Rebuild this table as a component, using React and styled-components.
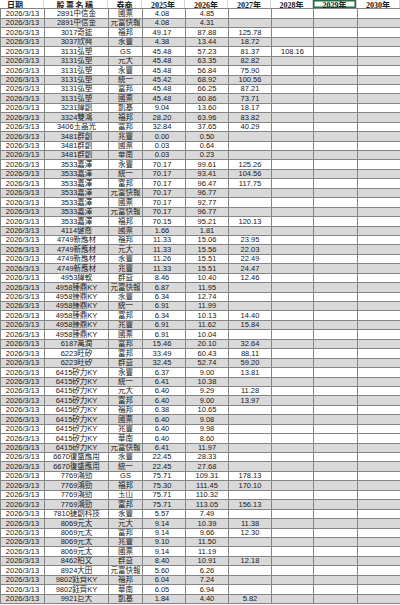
import React from "react";
import styled, { createGlobalStyle } from "styled-components";

const GlobalStyle = createGlobalStyle`
  html, body {
    margin: 0;
    padding: 0;
    background: #ffffff;
  }
`;

const COLS = "44px 64px 34px 43px 43px 43px 42px 44px 43px";
const ROW_H = "9.45px";
const LINE = "#858585";

const Sheet = styled.div`
  width: 400px;
  display: flex;
  flex-direction: column;
  font-family: "Liberation Sans", "Noto Sans CJK TC", sans-serif;
  color: #202020;
`;

const HeaderRow = styled.div`
  display: grid;
  grid-template-columns: ${COLS};
  height: ${ROW_H};
  background: #ffffff;
  border-bottom: 1px solid ${LINE};
  box-sizing: border-box;
`;

const HeadCell = styled.div`
  display: flex;
  align-items: center;
  justify-content: ${(p) => (p.$left ? "flex-start" : "center")};
  padding-left: ${(p) => (p.$left ? "7px" : "0")};
  font-family: "Liberation Serif", "Noto Sans CJK TC", serif;
  font-size: 8px;
  font-weight: 700;
  letter-spacing: ${(p) => (p.$spaced ? "1.5px" : "0")};
  white-space: nowrap;
  overflow: hidden;
  border-right: 1px solid #d4d4d4;
  box-sizing: border-box;
  box-shadow: ${(p) => (p.$selected ? "inset 0 0 0 1.5px #1f7244" : "none")};
`;

const Row = styled.div`
  display: grid;
  grid-template-columns: ${COLS};
  height: ${ROW_H};
  background: ${(p) => (p.$shade ? "#d9d9d9" : "#ffffff")};
  border-left: 1px solid ${LINE};
  box-sizing: border-box;
`;

const Cell = styled.div`
  display: flex;
  align-items: center;
  justify-content: center;
  font-size: 7.5px;
  line-height: 1;
  white-space: nowrap;
  overflow: hidden;
  border-right: 1px solid ${LINE};
  border-bottom: 1px solid ${LINE};
  box-sizing: border-box;
  padding-right: ${(p) => (p.$nudge ? "4px" : "0")};
`;

const header = ["日期", "股票名稱", "券商", "2025年", "2026年", "2027年", "2028年", "2029年", "2030年"];

const data = [
  ["2891中信金", "國票", "4.08", "4.85", "", ""],
  ["2891中信金", "元富快報", "4.08", "4.31", "", ""],
  ["3017奇鋐", "福邦", "49.17", "87.88", "125.78", ""],
  ["3037欣興", "永豐", "4.38", "13.44", "18.72", ""],
  ["3131弘塑", "GS", "45.48", "57.23", "81.37", "108.16"],
  ["3131弘塑", "元大", "45.48", "63.35", "82.82", ""],
  ["3131弘塑", "永豐", "45.48", "56.84", "75.90", ""],
  ["3131弘塑", "統一", "45.42", "68.92", "100.56", ""],
  ["3131弘塑", "富邦", "45.48", "66.25", "87.21", ""],
  ["3131弘塑", "國票", "45.48", "60.86", "73.71", ""],
  ["3231緯創", "凱基", "9.04", "13.60", "18.17", ""],
  ["3324雙鴻", "福邦", "28.20", "63.96", "83.82", ""],
  ["3406玉晶光", "富邦", "32.84", "37.65", "40.29", ""],
  ["3481群創", "兆豐", "0.00", "0.50", "", ""],
  ["3481群創", "國票", "0.03", "0.64", "", ""],
  ["3481群創", "華南", "0.03", "0.23", "", ""],
  ["3533嘉澤", "永豐", "70.17", "99.61", "125.26", ""],
  ["3533嘉澤", "統一", "70.17", "93.41", "104.56", ""],
  ["3533嘉澤", "富邦", "70.17", "96.47", "117.75", ""],
  ["3533嘉澤", "元富快報", "70.17", "96.77", "", ""],
  ["3533嘉澤", "國票", "70.17", "92.77", "", ""],
  ["3533嘉澤", "元富快報", "70.17", "96.77", "", ""],
  ["3533嘉澤", "福邦", "70.15", "95.21", "120.13", ""],
  ["4114健喬", "國票", "1.66", "1.81", "", ""],
  ["4749新應材", "福邦", "11.33", "15.06", "23.95", ""],
  ["4749新應材", "元大", "11.33", "15.56", "22.03", ""],
  ["4749新應材", "永豐", "11.26", "15.51", "22.49", ""],
  ["4749新應材", "兆豐", "11.33", "15.51", "24.47", ""],
  ["4953緯軟", "群益", "8.46", "10.40", "12.46", ""],
  ["4958臻鼎KY", "元富快報", "6.87", "11.95", "", ""],
  ["4958臻鼎KY", "永豐", "6.34", "12.74", "", ""],
  ["4958臻鼎KY", "統一", "6.91", "11.99", "", ""],
  ["4958臻鼎KY", "富邦", "6.34", "10.13", "14.40", ""],
  ["4958臻鼎KY", "兆豐", "6.91", "11.62", "15.84", ""],
  ["4958臻鼎KY", "國票", "6.91", "10.04", "", ""],
  ["6187萬潤", "富邦", "15.46", "20.10", "32.64", ""],
  ["6223旺矽", "富邦", "33.49", "60.43", "88.11", ""],
  ["6223旺矽", "群益", "32.45", "52.74", "59.20", ""],
  ["6415矽力KY", "永豐", "6.37", "9.00", "13.81", ""],
  ["6415矽力KY", "統一", "6.41", "10.38", "", ""],
  ["6415矽力KY", "元大", "6.40", "9.29", "11.28", ""],
  ["6415矽力KY", "富邦", "6.40", "9.00", "13.97", ""],
  ["6415矽力KY", "福邦", "6.38", "10.65", "", ""],
  ["6415矽力KY", "國票", "6.40", "9.08", "", ""],
  ["6415矽力KY", "兆豐", "6.40", "9.98", "", ""],
  ["6415矽力KY", "華南", "6.40", "8.60", "", ""],
  ["6415矽力KY", "元富快報", "6.41", "11.97", "", ""],
  ["6670復盛應用", "永豐", "22.45", "28.33", "", ""],
  ["6670復盛應用", "統一", "22.45", "27.68", "", ""],
  ["7769鴻勁", "GS", "75.71", "109.31", "178.13", ""],
  ["7769鴻勁", "福邦", "75.30", "111.45", "170.10", ""],
  ["7769鴻勁", "玉山", "75.71", "110.32", "", ""],
  ["7769鴻勁", "富邦", "75.71", "113.05", "156.13", ""],
  ["7810捷創科技", "永豐", "5.57", "7.49", "", ""],
  ["8069元太", "元大", "9.14", "10.39", "11.38", ""],
  ["8069元太", "富邦", "9.14", "9.66", "12.30", ""],
  ["8069元太", "兆豐", "9.10", "11.50", "", ""],
  ["8069元太", "國票", "9.14", "11.19", "", ""],
  ["8462柏文", "群益", "8.40", "10.91", "12.18", ""],
  ["8924大田", "元富快報", "5.60", "6.26", "", ""],
  ["9802鈺齊KY", "福邦", "6.04", "7.24", "", ""],
  ["9802鈺齊KY", "華南", "6.05", "6.94", "", ""],
  ["9921巨大", "凱基", "1.84", "4.40", "5.82", ""],
];

const isShaded = (n) => (n <= 45 ? n % 2 === 0 : n % 2 === 1);

export default function App() {
  return (
    <>
      <GlobalStyle />
      <Sheet>
        <HeaderRow>
          {header.map((h, i) => (
            <HeadCell key={h} $left={i === 0} $spaced={i === 1} $selected={i === 7}>
              {h}
            </HeadCell>
          ))}
        </HeaderRow>
        {data.map((r, i) => (
          <Row key={i} $shade={isShaded(i + 1)}>
            <Cell>2026/3/13</Cell>
            <Cell>{r[0]}</Cell>
            <Cell>{r[1]}</Cell>
            <Cell $nudge>{r[2]}</Cell>
            <Cell>{r[3]}</Cell>
            <Cell>{r[4]}</Cell>
            <Cell>{r[5]}</Cell>
            <Cell />
            <Cell />
          </Row>
        ))}
      </Sheet>
    </>
  );
}
